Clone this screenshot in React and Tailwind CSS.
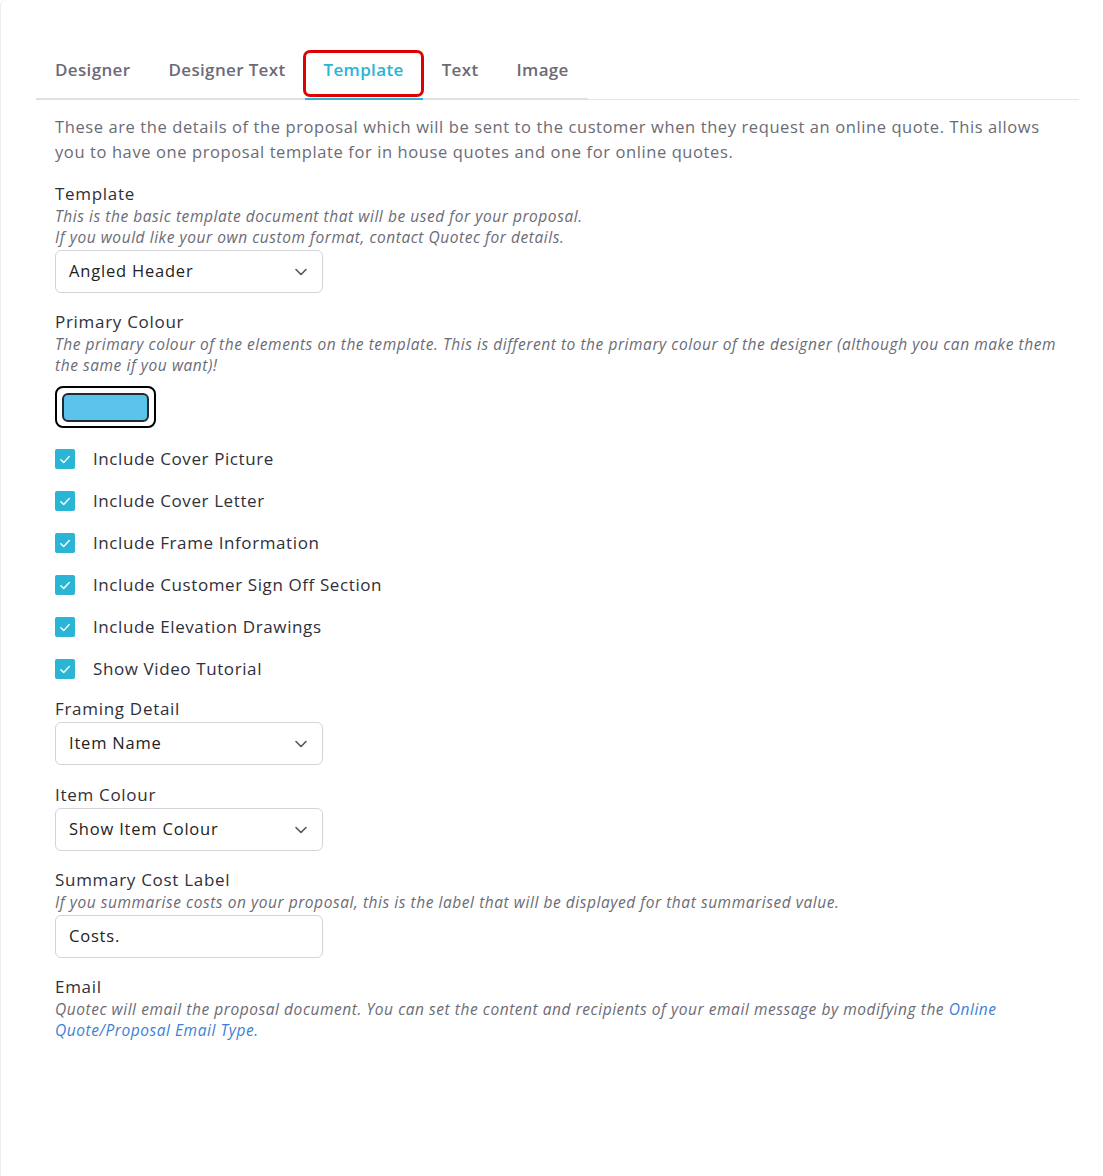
import React from "react";

const font = { fontFamily: '"Open Sans", "Noto Sans", sans-serif' };

function Chevron() {
  return (
    <svg width="16" height="16" viewBox="0 0 16 16" fill="none" stroke="#555" strokeWidth="1.6" strokeLinecap="round" strokeLinejoin="round">
      <path d="M3 5.5 L8 10.5 L13 5.5" />
    </svg>
  );
}

function Select({ value }) {
  return (
    <div className="flex h-[43px] w-[268px] items-center justify-between rounded-[6px] border border-[#d4d4d8] bg-white pl-[13px] pr-[13px] text-[16.5px] tracking-[0.8px] text-[#222]">
      <span>{value}</span>
      <Chevron />
    </div>
  );
}

function Check({ label }) {
  return (
    <div className="flex h-[42px] items-center">
      <div className="flex h-[20px] w-[20px] items-center justify-center rounded-[2px] bg-[#29b5d3]">
        <svg width="14" height="14" viewBox="0 0 14 14" fill="none" stroke="white" strokeWidth="1.4" strokeLinecap="round" strokeLinejoin="round">
          <path d="M2.8 7.8 L5.7 10.4 L11.3 4.4" />
        </svg>
      </div>
      <span className="ml-[18px] text-[17px] font-medium tracking-[0.6px] text-[#2f2f3a]">{label}</span>
    </div>
  );
}

function Label({ children }) {
  return <div className="text-[17px] font-medium leading-[24px] tracking-[0.7px] text-[#2f2f3a]">{children}</div>;
}

function Help({ children }) {
  return <div className="text-[15.5px] italic leading-[21px] tracking-[0.55px] text-[#6b6b76]">{children}</div>;
}

export default function App() {
  const tabs = ["Designer", "Designer Text", "Template", "Text", "Image"];
  return (
    <div style={font} className="min-h-[1176px] w-full bg-white">
      <div className="min-h-[1176px] rounded-tl-[6px] border-l border-[#ececec] bg-white">
        <div className="pl-[35px] pr-[24px] pt-[46px]">
          <div className="border-b border-[#e6e6e6]">
            <div className="-mb-[1px] flex w-[552px] border-b-2 border-[#e0e0e0]">
              {tabs.map((t) => {
                const active = t === "Template";
                return (
                  <div key={t} className="relative">
                    <div
                      className={
                        "-mb-[2px] px-[19px] pb-[16px] pt-[12px] text-[17px] font-semibold leading-[24px] tracking-[0.35px] " +
                        (active ? "border-b-2 border-[#29b5d3] text-[#29b5d3]" : "border-b-2 border-transparent text-[#6c6a77]")
                      }
                    >
                      {t}
                    </div>
                    {active && (
                      <div className="pointer-events-none absolute left-[-2px] right-[-1px] top-[4px] h-[47px] rounded-[7px] border-[3px] border-[#e00000]" />
                    )}
                  </div>
                );
              })}
            </div>
          </div>
          <div className="px-[19px]">
            <p className="mt-[14px] text-[16.5px] leading-[25px] tracking-[0.6px] text-[#6b6b76]">
              These are the details of the proposal which will be sent to the customer when they request an online quote. This allows you to have one proposal template for in house quotes and one for online quotes.
            </p>

            <div className="mt-[18px]">
              <Label>Template</Label>
              <Help>
                This is the basic template document that will be used for your proposal.
                <br />
                If you would like your own custom format, contact Quotec for details.
              </Help>
              <div className="mt-[2px]">
                <Select value="Angled Header" />
              </div>
            </div>

            <div className="mt-[17px]">
              <Label>Primary Colour</Label>
              <Help>
                The primary colour of the elements on the template. This is different to the primary colour of the designer (although you can make them the same if you want)!
              </Help>
              <div className="mt-[10px] flex h-[42px] w-[101px] items-center justify-center rounded-[8px] border-2 border-black bg-white">
                <div className="h-[29px] w-[87px] rounded-[6px] border-2 border-[#1f2a33] bg-[#5bc2ea]" />
              </div>
            </div>

            <div className="mt-[10px]">
              <Check label="Include Cover Picture" />
              <Check label="Include Cover Letter" />
              <Check label="Include Frame Information" />
              <Check label="Include Customer Sign Off Section" />
              <Check label="Include Elevation Drawings" />
              <Check label="Show Video Tutorial" />
            </div>

            <div className="mt-[7px]">
              <Label>Framing Detail</Label>
              <div className="mt-[1px]">
                <Select value="Item Name" />
              </div>
            </div>

            <div className="mt-[18px]">
              <Label>Item Colour</Label>
              <div className="mt-[1px]">
                <Select value="Show Item Colour" />
              </div>
            </div>

            <div className="mt-[17px]">
              <Label>Summary Cost Label</Label>
              <Help>If you summarise costs on your proposal, this is the label that will be displayed for that summarised value.</Help>
              <div className="mt-[2px] flex h-[43px] w-[268px] items-center rounded-[6px] border border-[#d4d4d8] pl-[13px] text-[16.5px] tracking-[0.8px] text-[#222]">
                Costs.
              </div>
            </div>

            <div className="mt-[17px]">
              <Label>Email</Label>
              <Help>
                Quotec will email the proposal document. You can set the content and recipients of your email message by modifying the{" "}
                <span className="text-[#3d7fd6]">Online Quote/Proposal Email Type.</span>
              </Help>
            </div>
          </div>
        </div>
      </div>
    </div>
  );
}
